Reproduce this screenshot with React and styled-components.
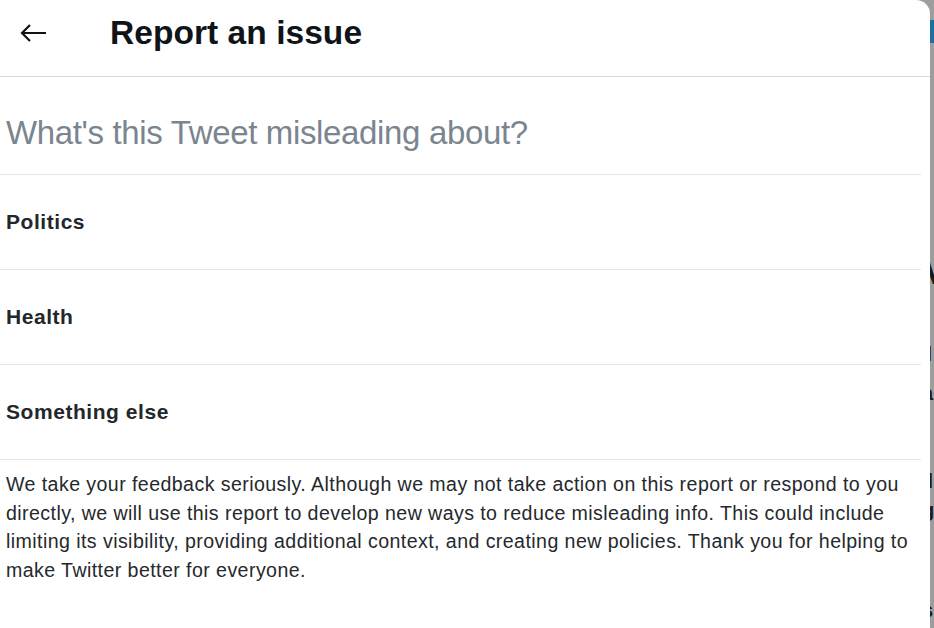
import React from "react";
import styled, { createGlobalStyle } from "styled-components";

const Global = createGlobalStyle`
  html, body { margin: 0; padding: 0; background: #9e9e9e; }
  body { font-family: "Liberation Sans", Arial, sans-serif; }
  #root { height: 628px; overflow: hidden; }
`;

const Page = styled.div`
  display: flex;
  height: 628px;
  width: 934px;
  overflow: hidden;
`;

const Panel = styled.div`
  width: 930px;
  flex: none;
  background: #ffffff;
  border-top-right-radius: 14px;
  display: flex;
  flex-direction: column;
`;

const Backdrop = styled.div`
  flex: 1;
  background: #9d9d9d;
  position: relative;
  overflow: hidden;
`;

const Fragment = styled.span`
  position: absolute;
  left: ${(p) => p.$x}px;
  top: ${(p) => p.$y}px;
  font-family: "Liberation Sans", Arial, sans-serif;
  font-weight: 700;
  font-size: ${(p) => p.$size || 28}px;
  color: #1a1a1a;
  line-height: 1;
`;

const BlueBar = styled.div`
  position: absolute;
  left: 0;
  top: 20px;
  width: 10px;
  height: 23px;
  background: #1d6fa8;
`;

const Header = styled.header`
  height: 76px;
  border-bottom: 1px solid #d6d9db;
  display: flex;
  align-items: center;
  flex: none;
`;

const BackButton = styled.button`
  width: 66px;
  height: 66px;
  margin-top: -10px;
  border: none;
  background: transparent;
  display: flex;
  align-items: center;
  justify-content: center;
  padding: 0;
  cursor: pointer;
`;

const Title = styled.h1`
  margin: -10px 0 0 44px;
  font-size: 33.5px;
  font-weight: 700;
  color: #0f1419;
  letter-spacing: 0.05px;
`;

const Content = styled.div`
  margin-right: 9px;
  display: flex;
  flex-direction: column;
`;

const Question = styled.h2`
  margin: 0;
  height: 98px;
  box-sizing: border-box;
  padding: 37px 0 0 6px;
  font-size: 33px;
  font-weight: 400;
  color: #7a8590;
  border-bottom: 1px solid #e4e7ea;
  letter-spacing: -0.35px;
`;

const Option = styled.div`
  height: 95px;
  box-sizing: border-box;
  border-bottom: 1px solid #e4e7ea;
  display: flex;
  align-items: center;
  padding: 0 0 0 6px;
  font-size: 21px;
  font-weight: 700;
  color: #23272b;
  letter-spacing: 0.55px;
`;

const Note = styled.p`
  margin: 0;
  padding: 10px 0 0 6px;
  font-size: 19.6px;
  line-height: 28.7px;
  color: #25292d;
  letter-spacing: 0.42px;
`;

function BackArrow() {
  return (
    <svg width="28" height="20" viewBox="0 0 28 20" aria-hidden="true">
      <path
        d="M27 10H3M11 2L3 10L11 18"
        fill="none"
        stroke="#0f1419"
        strokeWidth="2.2"
        strokeLinecap="butt"
        strokeLinejoin="miter"
      />
    </svg>
  );
}

export default function App() {
  return (
    <>
      <Global />
      <Page>
        <Panel>
          <Header>
            <BackButton aria-label="Back">
              <BackArrow />
            </BackButton>
            <Title>Report an issue</Title>
          </Header>
          <Content>
            <Question>What's this Tweet misleading about?</Question>
            <Option>Politics</Option>
            <Option>Health</Option>
            <Option>Something else</Option>
            <Note>
              We take your feedback seriously. Although we may not take action on this report or respond to you
              directly, we will use this report to develop new ways to reduce misleading info. This could include
              limiting its visibility, providing additional context, and creating new policies. Thank you for helping to
              make Twitter better for everyone.
            </Note>
          </Content>
        </Panel>
        <Backdrop>
          <BlueBar />
          <Fragment $x={-6} $y={255} $size={34}>V</Fragment>
          <Fragment $x={-4} $y={343} $size={22}>I</Fragment>
          <Fragment $x={-8} $y={383} $size={20}>a</Fragment>
          <Fragment $x={-3} $y={470} $size={22}>I</Fragment>
          <Fragment $x={-8} $y={500} $size={20}>g</Fragment>
          <Fragment $x={-8} $y={600} $size={20}>s</Fragment>
        </Backdrop>
      </Page>
    </>
  );
}
